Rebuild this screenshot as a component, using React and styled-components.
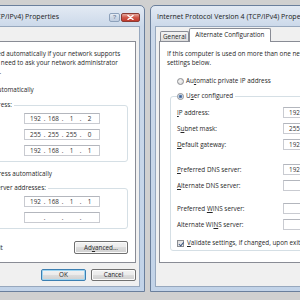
import React from 'react';
import styled, { createGlobalStyle } from 'styled-components';

const GlobalStyle = createGlobalStyle`
  html, body { margin: 0; padding: 0; }
  body { background: #d0d0d0; }
`;

export default function App() {
    return (
        <>
            <GlobalStyle />
            <Desktop>
                <Window $width={251} $offset={-106}>
                    <TitleBar title='Internet Protocol Version 4 (TCP/IPv4) Properties' />
                    <Client>
                        <TabRow>
                            <Tab $selected>General</Tab>
                        </TabRow>
                        <Panel>
                            <Intro>
                                You can get IP settings assigned automatically if your network supports<br />
                                this capability. Otherwise, you need to ask your network administrator<br />
                                for the appropriate IP settings.
                            </Intro>
                            <RadioRow $mt={10} $ml={11}>
                                <Radio /> <span>Obtain an IP address <Key>a</Key>utomatically</span>
                            </RadioRow>
                            <GroupBox $mt={7} $pt={4} $pb={5}>
                                <Legend>
                                    <Radio $checked /> <span>U<Key>s</Key>e the following IP address:</span>
                                </Legend>
                                <FieldRow><Label><Key>I</Key>P address:</Label><IpBox value={['192', '168', '1', '2']} /></FieldRow>
                                <FieldRow $mt={5}><Label>S<Key>u</Key>bnet mask:</Label><IpBox value={['255', '255', '255', '0']} /></FieldRow>
                                <FieldRow $mt={5}><Label><Key>D</Key>efault gateway:</Label><IpBox value={['192', '168', '1', '1']} /></FieldRow>
                            </GroupBox>
                            <RadioRow $mt={8} $ml={11}>
                                <Radio /> <span>O<Key>b</Key>tain DNS server address automatically</span>
                            </RadioRow>
                            <GroupBox $mt={6} $pt={4} $pb={5}>
                                <Legend>
                                    <Radio $checked /> <span>Us<Key>e</Key> the following DNS server addresses:</span>
                                </Legend>
                                <FieldRow><Label><Key>P</Key>referred DNS server:</Label><IpBox value={['192', '168', '1', '1']} /></FieldRow>
                                <FieldRow $mt={5}><Label><Key>A</Key>lternate DNS server:</Label><IpBox value={['', '', '', '']} /></FieldRow>
                            </GroupBox>
                            <ActionRow>
                                <CheckRow $ml={4}>
                                    <Check /> <span>Va<Key>l</Key>idate settings upon exit</span>
                                </CheckRow>
                                <Button $width={54} $height={13}>Ad<Key>v</Key>anced...</Button>
                            </ActionRow>
                        </Panel>
                        <Footer>
                            <Button $default>OK</Button>
                            <Button>Cancel</Button>
                        </Footer>
                    </Client>
                </Window>

                <Window $width={270}>
                    <TitleBar title='Internet Protocol Version 4 (TCP/IPv4) Properties' />
                    <Client>
                        <TabRow>
                            <Tab>General</Tab>
                            <Tab $selected>Alternate Configuration</Tab>
                        </TabRow>
                        <Panel>
                            <Intro>
                                If this computer is used on more than one network, enter the alternate IP<br />
                                settings below.
                            </Intro>
                            <RadioRow $mt={10} $ml={10}>
                                <Radio /> <span>Au<Key>t</Key>omatic private IP address</span>
                            </RadioRow>
                            <GroupBox $mt={7} $ml={3} $pt={7} $pb={3}>
                                <Legend>
                                    <Radio $checked /> <span>U<Key>s</Key>er configured</span>
                                </Legend>
                                <FieldRow><Label><Key>I</Key>P address:</Label><IpBox value={['192', '168', '1', '2']} /></FieldRow>
                                <FieldRow $mt={5}><Label>S<Key>u</Key>bnet mask:</Label><IpBox value={['255', '255', '255', '0']} /></FieldRow>
                                <FieldRow $mt={5}><Label><Key>D</Key>efault gateway:</Label><IpBox value={['192', '168', '1', '1']} /></FieldRow>
                                <FieldRow $mt={14}><Label><Key>P</Key>referred DNS server:</Label><IpBox value={['192', '168', '1', '1']} /></FieldRow>
                                <FieldRow $mt={5}><Label><Key>A</Key>lternate DNS server:</Label><IpBox value={['', '', '', '']} /></FieldRow>
                                <FieldRow $mt={12}><Label>Preferred <Key>W</Key>INS server:</Label><IpBox value={['', '', '', '']} /></FieldRow>
                                <FieldRow $mt={5}><Label>Alternate WI<Key>N</Key>S server:</Label><IpBox value={['', '', '', '']} /></FieldRow>
                                <CheckRow $mt={9}>
                                    <Check $checked /> <span><Key>V</Key>alidate settings, if changed, upon exit</span>
                                </CheckRow>
                            </GroupBox>
                        </Panel>
                        <Footer />
                    </Client>
                </Window>
            </Desktop>
        </>
    )
};

function TitleBar({ title }) {
    return (
        <Caption>
            <CaptionText>{title}</CaptionText>
            <CaptionButton>?</CaptionButton>
            <CaptionButton $close>
                <svg width='7' height='5' viewBox='0 0 7 5'>
                    <path d='M1 0.5 L6 4.5 M6 0.5 L1 4.5' stroke='#fff' strokeWidth='1.4' strokeLinecap='round' />
                </svg>
            </CaptionButton>
        </Caption>
    )
}

function IpBox({ value }) {
    return (
        <IpField>
            {value.map((part, i) => (
                <React.Fragment key={i}>
                    {i > 0 && <IpDot>.</IpDot>}
                    <IpPart>{part}</IpPart>
                </React.Fragment>
            ))}
        </IpField>
    )
}

const Desktop = styled.div`
width: 300px;
height: 300px;
overflow: hidden;
box-sizing: border-box;
display: flex;
gap: 5px;
padding-top: 5px;
background: #d0d0d0;
font-family: "Open Sans", "Liberation Sans", sans-serif;
font-size: 6.33px;
line-height: 8px;
color: #262626;
`

const Window = styled.div`
flex: none;
width: ${p => p.$width}px;
margin-left: ${p => p.$offset || 0}px;
height: 287px;
box-sizing: border-box;
display: flex;
flex-direction: column;
padding: 0 4px 4px;
border: 1px solid #6a7f9c;
border-radius: 5px 5px 0 0;
background: linear-gradient(#e3eaf4, #ccd9ea 20px, #c2d3e8);
`

const Caption = styled.div`
height: 20px;
box-sizing: border-box;
padding: 2px 0 0 2px;
display: flex;
align-items: center;
gap: 1px;
`

const CaptionText = styled.div`
flex: 1;
min-width: 0;
white-space: nowrap;
overflow: hidden;
font-size: 7px;
color: #1a1a1a;
`

const CaptionButton = styled.div`
flex: none;
width: ${p => p.$close ? 19 : 11}px;
height: 9px;
box-sizing: border-box;
display: flex;
align-items: center;
justify-content: center;
border: 1px solid ${p => p.$close ? '#8a3a33' : '#8da1bb'};
border-radius: 2px;
background: ${p => p.$close
        ? 'linear-gradient(#e6a99f, #d0584b 50%, #c2392c)'
        : 'linear-gradient(#e6edf6, #cdd8e6 50%, #c0cde0)'};
font-family: "Liberation Sans", sans-serif;
font-size: 6px;
font-weight: bold;
line-height: 1;
color: #7b8ca3;
`

const Client = styled.div`
flex: 1;
min-height: 0;
display: flex;
flex-direction: column;
padding: 0 3px;
border: 1px solid #97a8be;
background: #f0f0f0;
`

const TabRow = styled.div`
height: 14px;
flex: none;
display: flex;
align-items: flex-end;
padding-left: 1px;
`

const Tab = styled.div`
position: relative;
z-index: ${p => p.$selected ? 1 : 0};
height: ${p => p.$selected ? 14 : 10}px;
margin-bottom: ${p => p.$selected ? -1 : 0}px;
box-sizing: border-box;
padding: ${p => p.$selected ? '2px 5px 0' : '1px 2px 0'};
border: 1px solid #898c95;
border-bottom: none;
border-radius: 2px 2px 0 0;
background: ${p => p.$selected ? '#fff' : 'linear-gradient(#f3f3f3, #ebebeb 50%, #dcdcdc)'};
white-space: nowrap;
`

const Panel = styled.div`
flex: none;
height: 222px;
box-sizing: border-box;
padding: 7px 7px 0;
border: 1px solid #898c95;
background: #fff;
`

const Intro = styled.p`
margin: 0;
line-height: 9px;
white-space: nowrap;
`

const Key = styled.u`
text-decoration-thickness: 0.5px;
text-underline-offset: 1px;
`

const RadioRow = styled.div`
display: flex;
align-items: center;
gap: 2px;
height: 8px;
margin-top: ${p => p.$mt || 0}px;
margin-left: ${p => p.$ml || 0}px;
white-space: nowrap;
`

const Radio = styled.span`
flex: none;
display: inline-block;
width: 7px;
height: 7px;
box-sizing: border-box;
border: 1px solid #8b8d91;
border-radius: 50%;
background: ${p => p.$checked
        ? 'radial-gradient(circle, #3c5a86 0, #6c8fc0 1.6px, #e8eef6 2.2px)'
        : 'radial-gradient(circle at 40% 40%, #f4f4f4, #d6d6d6)'};
`

const GroupBox = styled.fieldset`
min-width: 0;
margin: ${p => p.$mt || 0}px 0 0 ${p => p.$ml || 0}px;
padding: ${p => p.$pt}px 0 ${p => p.$pb}px 6px;
border: 1px solid #d5dfe5;
border-radius: 3px;
`

const Legend = styled.legend`
display: flex;
align-items: center;
gap: 2px;
height: 8px;
padding: 0 2px 0 0;
white-space: nowrap;
`

const FieldRow = styled.div`
display: flex;
align-items: center;
height: 11px;
margin-top: ${p => p.$mt || 0}px;
white-space: nowrap;
`

const Label = styled.div`
flex: none;
width: 106px;
`

const IpField = styled.div`
flex: none;
width: 76px;
height: 11px;
box-sizing: border-box;
display: flex;
align-items: center;
padding-left: 3px;
border: 1px solid #c9cbd1;
border-top-color: #b3b6bd;
background: #fff;
color: #333;
`

const IpPart = styled.span`
width: 15px;
text-align: center;
`

const IpDot = styled.span`
width: 3px;
text-align: center;
`

const CheckRow = styled.div`
display: flex;
align-items: center;
gap: 3px;
height: 8px;
margin-top: ${p => p.$mt || 0}px;
margin-left: ${p => p.$ml || 0}px;
white-space: nowrap;
`

const Check = styled.span`
flex: none;
position: relative;
width: 7px;
height: 7px;
box-sizing: border-box;
border: 1px solid #8b8d91;
background: linear-gradient(135deg, #dcdcdc, #f6f6f6);
&::after {
    content: '';
    display: ${p => p.$checked ? 'block' : 'none'};
    position: absolute;
    left: 1.5px;
    top: 0;
    width: 1.5px;
    height: 3.5px;
    border: solid #3f5883;
    border-width: 0 1px 1px 0;
    transform: rotate(40deg);
}
`

const ActionRow = styled.div`
display: flex;
align-items: center;
justify-content: space-between;
margin-top: 12px;
`

const Button = styled.div`
flex: none;
width: ${p => p.$width || 45}px;
height: ${p => p.$height || 12}px;
box-sizing: border-box;
display: flex;
align-items: center;
justify-content: center;
border: 1px solid ${p => p.$default ? '#3c7fb1' : '#707070'};
border-radius: 2px;
background: linear-gradient(#f2f2f2, #ebebeb 50%, #dddddd 50%, #cfcfcf);
box-shadow: ${p => p.$default ? 'inset 0 0 0 1px #9fd6f2' : 'inset 0 0 0 1px #fbfbfb'};
white-space: nowrap;
`

const Footer = styled.div`
flex: 1;
display: flex;
align-items: center;
justify-content: flex-end;
gap: 5px;
`
